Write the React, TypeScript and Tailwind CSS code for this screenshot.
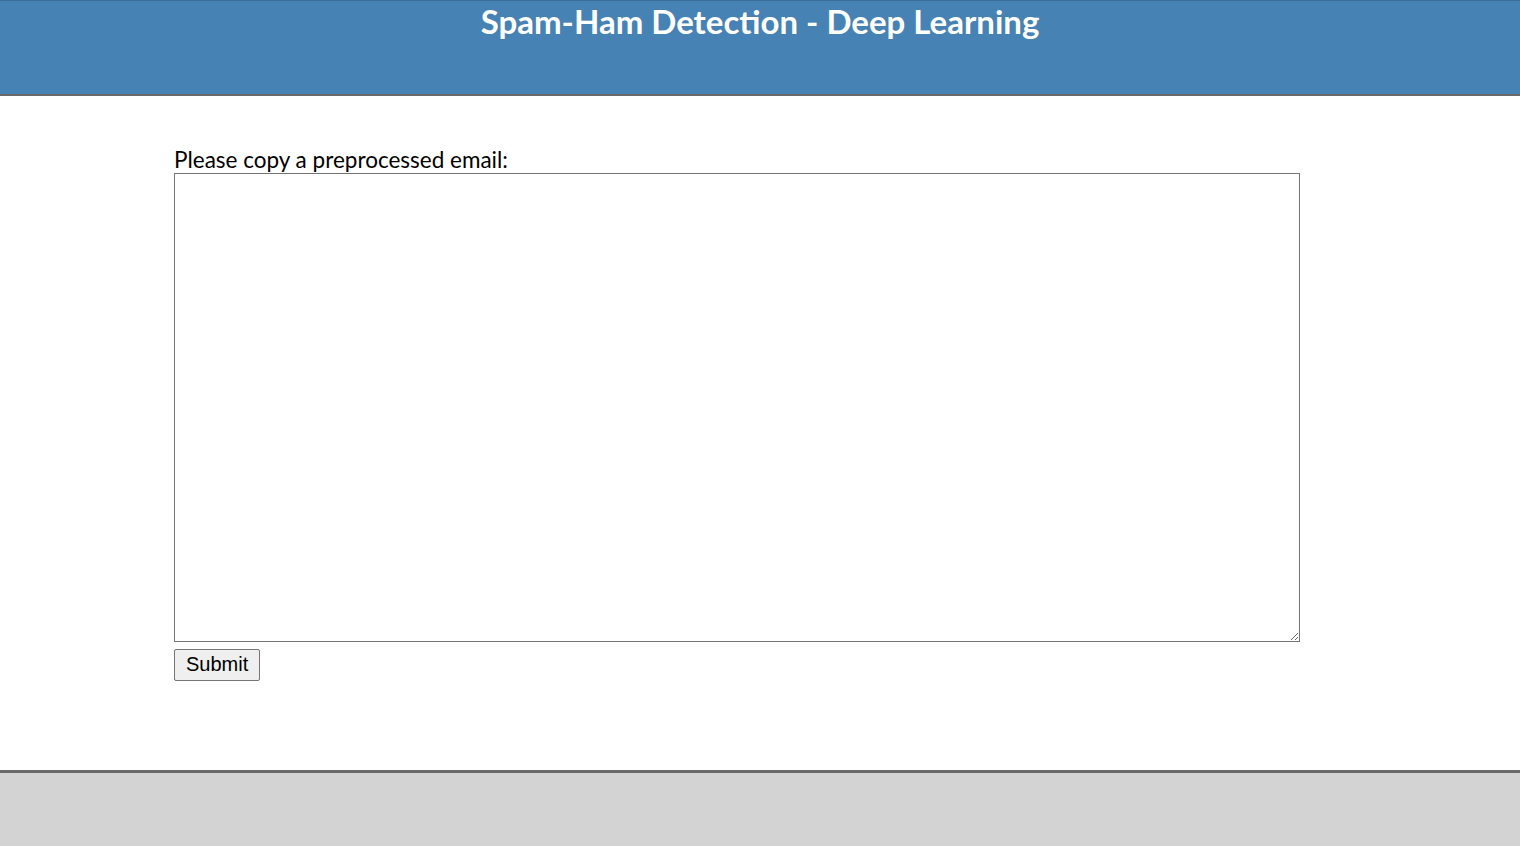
import React from 'react';

export default function App() {
  return (
    <div className="flex h-[846px] flex-col bg-white">
      {/* Header */}
      <header className="h-[96px] border-t border-b-2 border-t-[#3a6e99] border-b-[#696969] bg-[#4682b4]">
        <h1 className="text-center text-[33px] leading-[40px] font-bold text-white [font-family:Lato,'Open_Sans',sans-serif]">
          Spam-Ham Detection - Deep Learning
        </h1>
      </header>

      {/* Form */}
      <main className="flex-1 pl-[174px] pt-[51px]">
        <label
          htmlFor="email"
          className="block text-[22.5px] leading-[26px] text-black [font-family:Lato,'Open_Sans',sans-serif]"
        >
          Please copy a preprocessed email:
        </label>
        <textarea
          id="email"
          className="block h-[469px] w-[1126px] border border-[#767676] bg-white outline-none"
        />
        <button
          type="button"
          className="mt-[7px] h-[32px] rounded-[2px] border border-[#767676] bg-[#efefef] px-[11px] pb-[3px] text-[20px] leading-none text-black [font-family:'Liberation_Sans',Arial,sans-serif]"
        >
          Submit
        </button>
      </main>

      {/* Footer */}
      <footer className="h-[76px] border-t-[3px] border-[#696969] bg-[#d3d3d3]" />
    </div>
  );
}
